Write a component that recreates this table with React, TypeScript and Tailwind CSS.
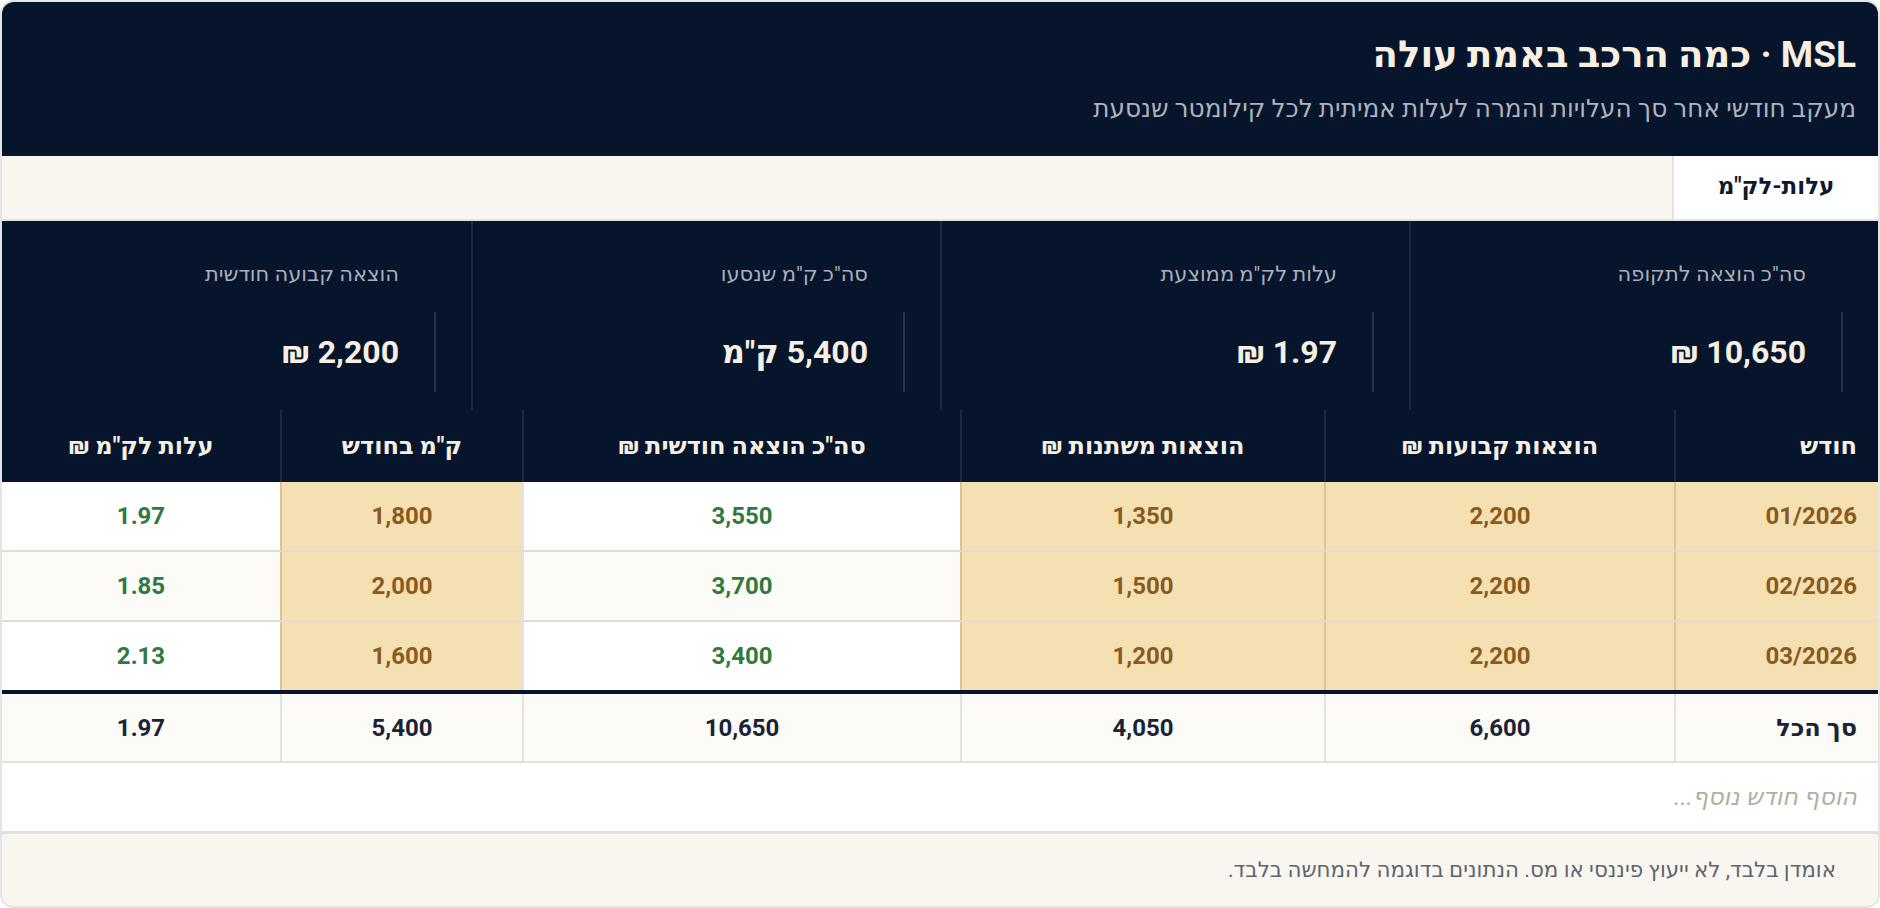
import React from "react";

type Row = {
  month: string;
  fixed: string;
  variable: string;
  total: string;
  km: string;
  cost: string;
};

const rows: Row[] = [
  { month: "01/2026", fixed: "2,200", variable: "1,350", total: "3,550", km: "1,800", cost: "1.97" },
  { month: "02/2026", fixed: "2,200", variable: "1,500", total: "3,700", km: "2,000", cost: "1.85" },
  { month: "03/2026", fixed: "2,200", variable: "1,200", total: "3,400", km: "1,600", cost: "2.13" },
];

const stats = [
  { label: 'סה"כ הוצאה לתקופה', value: "10,650 ₪" },
  { label: 'עלות לק"מ ממוצעת', value: "1.97 ₪" },
  { label: 'סה"כ ק"מ שנסעו', value: '5,400 ק"מ' },
  { label: "הוצאה קבועה חודשית", value: "2,200 ₪" },
];

const headers = [
  "חודש",
  "הוצאות קבועות ₪",
  "הוצאות משתנות ₪",
  'סה"כ הוצאה חודשית ₪',
  'ק"מ בחודש',
  'עלות לק"מ ₪',
];

const cols = "grid grid-cols-[204px_350px_364px_438px_242px_1fr]";

function StatCell({ label, value, last }: { label: string; value: string; last?: boolean }) {
  return (
    <div className={`pr-[35px] pt-[40px] pb-[18px] ${last ? "" : "border-l-2 border-[#1a2740]"}`}>
      <div className="pr-[37px] text-[21px] leading-[26px] text-[#aab0bb]">{label}</div>
      <div className="mt-[25px] h-[80px] border-r-2 border-[#24324d] pr-[35px] flex items-center">
        <span className="text-[32px] font-bold text-[#f6efe2]">{value}</span>
      </div>
    </div>
  );
}

export default function App() {
  return (
    <div
      dir="rtl"
      className="w-[1880px] h-[908px] bg-white"
      style={{ fontFamily: 'Roboto, "DejaVu Sans", sans-serif' }}
    >
      <div className="h-full flex flex-col rounded-[14px] border-2 border-[#e3e3e8] overflow-hidden bg-white">
        {/* header */}
        <div className="bg-[#06152c] px-[22px] pt-[31px] pb-[31px]">
          <h1 className="text-[37px] leading-[44px] font-bold text-[#f7efe2]">MSL · כמה הרכב באמת עולה</h1>
          <p className="mt-[16px] text-[24.75px] leading-[32px] text-[#aeb3bd]">
            מעקב חודשי אחר סך העלויות והמרה לעלות אמיתית לכל קילומטר שנסעת
          </p>
        </div>

        {/* tabs */}
        <div className="flex h-[65px] bg-[#f9f6ef] border-b-2 border-[#e2e2e2]">
          <div className="w-[206px] bg-white border-l-2 border-[#e2e2e2] flex items-center justify-center text-[23px] font-bold text-[#101a2e]">
            עלות-לק"מ
          </div>
        </div>

        {/* stats */}
        <div className="grid grid-cols-4 bg-[#06152c]">
          {stats.map((s, i) => (
            <StatCell key={s.label} label={s.label} value={s.value} last={i === stats.length - 1} />
          ))}
        </div>

        {/* table header */}
        <div className={`${cols} bg-[#06152c] h-[72px]`}>
          {headers.map((h, i) => (
            <div
              key={h}
              className={`flex items-center text-[24px] font-bold text-[#f6efe2] ${
                i === 0 ? "justify-start pr-[21px]" : "justify-center"
              } ${i < headers.length - 1 ? "border-l-2 border-[#1c2942]" : ""}`}
            >
              {h}
            </div>
          ))}
        </div>

        {/* body */}
        {rows.map((r, ri) => {
          const alt = ri === 1 ? "bg-[#fcfbf8]" : "bg-white";
          const input = "bg-[#f5e0b4] text-[#8a5a1d] border-[#dcc595]";
          const calc = `${alt} text-[#2f7a3c] border-[#e2e2e2]`;
          const last = ri === rows.length - 1;
          const cells = [
            { v: r.month, c: input, start: true },
            { v: r.fixed, c: input },
            { v: r.variable, c: input },
            { v: r.total, c: calc },
            { v: r.km, c: input },
            { v: r.cost, c: calc },
          ];
          return (
            <div
              key={r.month}
              className={`${cols} ${last ? "h-[68px]" : "h-[70px] border-b-2 border-[#e0dcd3]"}`}
            >
              {cells.map((c, i) => (
                <div
                  key={i}
                  className={`${c.c} flex items-center text-[24px] font-bold ${
                    c.start ? "justify-start pr-[21px]" : "justify-center"
                  } ${i < cells.length - 1 ? "border-l-2" : ""}`}
                >
                  {c.v}
                </div>
              ))}
            </div>
          );
        })}

        {/* totals */}
        <div className={`${cols} h-[73px] border-t-4 border-b-2 border-t-[#06152c] border-b-[#e0e0e0] bg-[#fcfbf7]`}>
          {["סך הכל", "6,600", "4,050", "10,650", "5,400", "1.97"].map((v, i) => (
            <div
              key={i}
              className={`flex items-center text-[24px] font-bold text-[#1a2336] ${
                i === 0 ? "justify-start pr-[21px]" : "justify-center"
              } ${i < 5 ? "border-l-2 border-[#e2e2e2]" : ""}`}
            >
              {v}
            </div>
          ))}
        </div>

        {/* add row */}
        <div className="h-[71px] flex items-center pr-[21px] bg-white border-b-[3px] border-[#e0e0e0]">
          <span className="text-[24px] italic text-[#b4aea2]">הוסף חודש נוסף...</span>
        </div>

        {/* footer */}
        <div className="flex-1 flex items-center pr-[42px] bg-[#f9f6ef]">
          <span className="text-[21.4px] text-[#5d6471]">
            אומדן בלבד, לא ייעוץ פיננסי או מס. הנתונים בדוגמה להמחשה בלבד.
          </span>
        </div>
      </div>
    </div>
  );
}
